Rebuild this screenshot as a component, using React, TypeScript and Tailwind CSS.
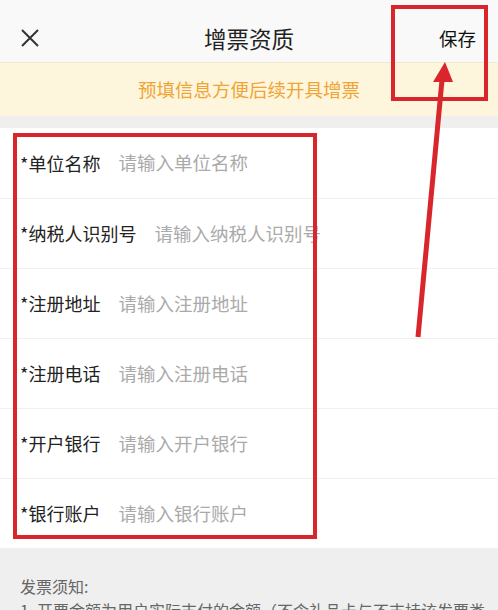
import React from 'react';

const fields = [
  { label: '*单位名称', placeholder: '请输入单位名称' },
  { label: '*纳税人识别号', placeholder: '请输入纳税人识别号' },
  { label: '*注册地址', placeholder: '请输入注册地址' },
  { label: '*注册电话', placeholder: '请输入注册电话' },
  { label: '*开户银行', placeholder: '请输入开户银行' },
  { label: '*银行账户', placeholder: '请输入银行账户' },
];

const App: React.FC = () => {
  return (
    <div
      className="relative w-[498px] h-[610px] overflow-hidden bg-[#efefef]"
      style={{ fontFamily: '"Noto Sans CJK SC", "Noto Sans", sans-serif' }}
    >
      {/* header */}
      <header className="h-[62px] bg-[#f9f9f9] flex items-center px-5 pt-[14px] relative">
        <svg className="w-5 h-5 text-[#333]" viewBox="0 0 20 20" fill="none" stroke="currentColor" strokeWidth="2">
          <path d="M2 2 L18 18 M18 2 L2 18" />
        </svg>
        <h1 className="absolute left-1/2 -translate-x-1/2 text-[22.5px] text-[#222] leading-none">增票资质</h1>
        <button className="ml-auto mr-[2px] text-[18.5px] text-[#111] leading-none">保存</button>
      </header>

      <div className="h-[54px] bg-[#fdf6dc] flex items-center justify-center border-t border-[#f1ead2]">
        <span className="text-[18.5px] text-[#f0a435]">预填信息方便后续开具增票</span>
      </div>

      <div className="h-[12px] bg-[#efefef]" />

      <div className="bg-white">
        {fields.map((f, i) => (
          <div key={f.label} className={`h-[70px] flex items-center pl-[20px] ${i > 0 ? 'border-t border-[#f0f0f0]' : ''}`}>
            <span className="text-[18px] text-[#222]">{f.label}</span>
            <span className="ml-[18px] text-[18.5px] text-[#aaa]">{f.placeholder}</span>
          </div>
        ))}
      </div>

      <div className="px-5 pt-[26px] text-[16px] text-[#666] leading-[24px]">
        <p>发票须知:</p>
        <p className="whitespace-nowrap">1. 开票金额为用户实际支付的金额（不含礼品卡与不支持该发票类</p>
      </div>

      {/* annotations */}
      <div className="absolute left-[391px] top-[5px] w-[97px] h-[96px] border-4 border-[#d8262c]" />
      <div className="absolute left-[13px] top-[133px] w-[304px] h-[406px] border-4 border-[#d8262c]" />
      <svg className="absolute left-0 top-0" width="498" height="610" viewBox="0 0 498 610">
        <line x1="418" y1="337" x2="442" y2="80" stroke="#d8262c" strokeWidth="5" />
        <polygon points="445,62 433,82 453,82" fill="#d8262c" />
      </svg>
    </div>
  );
};

export default App;
